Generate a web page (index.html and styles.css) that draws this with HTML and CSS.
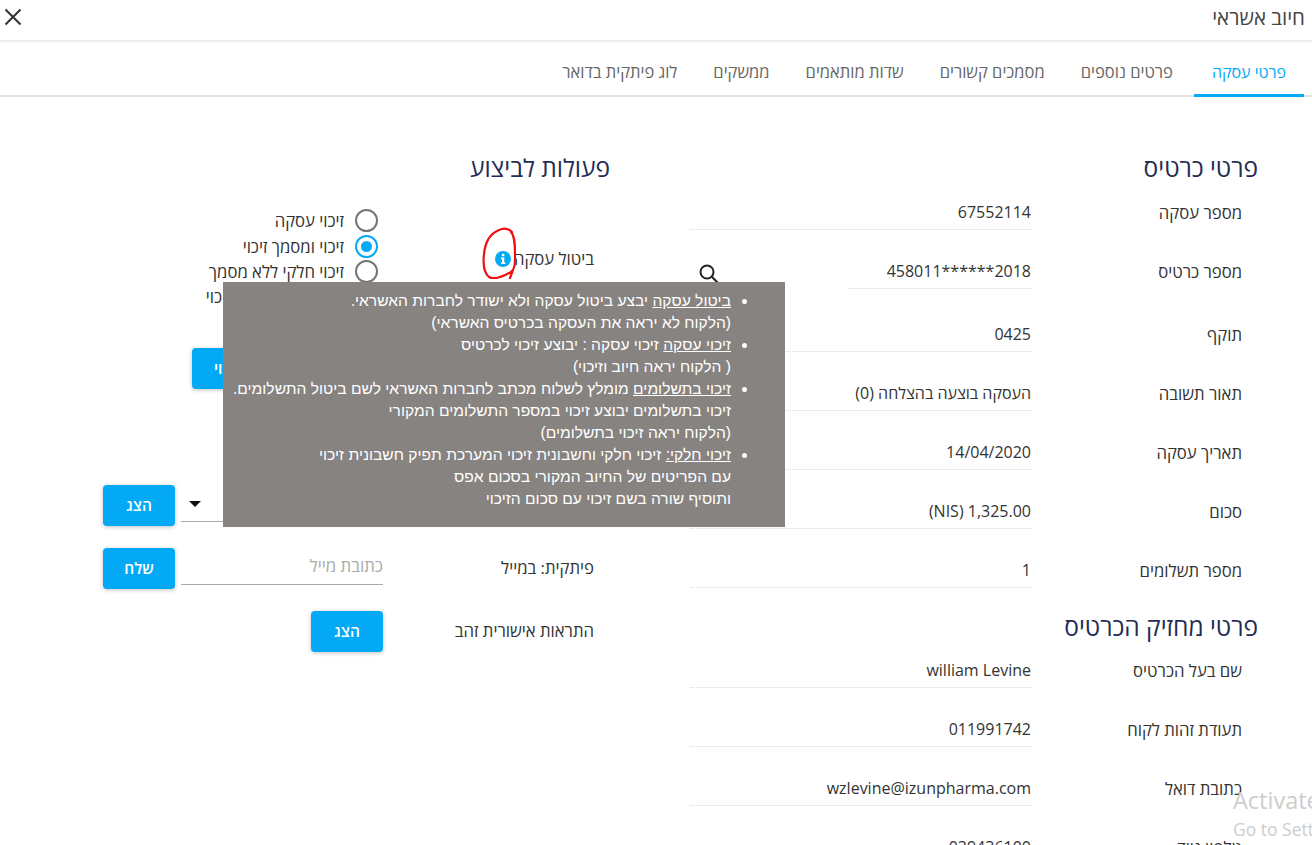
FILE: index.html
```html
<!DOCTYPE html>
<html lang="he" dir="rtl">
<head>
<meta charset="utf-8">
<title>חיוב אשראי</title>
<link rel="stylesheet" href="styles.css">
</head>
<body>
<div class="page">
  <header class="topbar">
    <h1 class="title">חיוב אשראי</h1>
    <svg class="close" viewBox="0 0 18 18" width="18" height="18" aria-label="סגור"><path d="M1.5 1.5 16.5 16.5M16.5 1.5 1.5 16.5"/></svg>
  </header>
  <nav class="tabs">
    <a class="tab active">פרטי עסקה</a>
    <a class="tab">פרטים נוספים</a>
    <a class="tab">מסמכים קשורים</a>
    <a class="tab">שדות מותאמים</a>
    <a class="tab">ממשקים</a>
    <a class="tab">לוג פיתקית בדואר</a>
  </nav>
  <main class="content">
    <section class="details">
      <h2 class="heading">פרטי כרטיס</h2>
      <div class="rows">
        <div class="row"><span class="label">מספר עסקה</span><span class="value">67552114</span></div>
        <div class="row"><span class="label">מספר כרטיס</span><span class="value short" dir="ltr">458011******2018</span>
          <svg class="search" viewBox="0 0 24 24" width="24" height="24"><circle cx="10" cy="10" r="6.5"/><path d="M14.8 14.8 21 21"/></svg></div>
        <div class="row tall"><span class="label">תוקף</span><span class="value">0425</span></div>
        <div class="row"><span class="label">תאור תשובה</span><span class="value">העסקה בוצעה בהצלחה (0)</span></div>
        <div class="row"><span class="label">תאריך עסקה</span><span class="value">14/04/2020</span></div>
        <div class="row"><span class="label">סכום</span><span class="value" dir="ltr">(NIS) 1,325.00</span></div>
        <div class="row"><span class="label">מספר תשלומים</span><span class="value">1</span></div>
      </div>
      <h2 class="heading second">פרטי מחזיק הכרטיס</h2>
      <div class="rows">
        <div class="row"><span class="label">שם בעל הכרטיס</span><span class="value" dir="ltr">william Levine</span></div>
        <div class="row"><span class="label">תעודת זהות לקוח</span><span class="value">011991742</span></div>
        <div class="row"><span class="label">כתובת דואל</span><span class="value" dir="ltr">wzlevine@izunpharma.com</span></div>
        <div class="row"><span class="label">טלפון נייד</span><span class="value">039436100</span></div>
      </div>
    </section>
    <section class="actions">
      <h2 class="heading">פעולות לביצוע</h2>
      <div class="action cancel">
        <span class="label with-icon">ביטול עסקה
          <svg class="info" viewBox="0 0 16 16" width="16" height="16"><circle cx="8" cy="8" r="8"/><rect class="glyph" x="6.9" y="2.8" width="2.5" height="2.4" rx=".6"/><path class="glyph" d="M5.9 6.5H9.3V11.6H10.4V13H5.9V11.6H7V7.9H5.9Z"/></svg>
        </span>
        <div class="radios">
          <label class="radio"><span class="dot"></span>זיכוי עסקה</label>
          <label class="radio"><span class="dot on"></span>זיכוי ומסמך זיכוי</label>
          <label class="radio"><span class="dot"></span>זיכוי חלקי ללא מסמך</label>
          <label class="radio"><span class="dot"></span>זיכוי חלקי ומסמך זיכוי</label>
        </div>
      </div>
      <button class="btn run">בצע זיכוי</button>
      <div class="action print">
        <span class="label"></span>
        <div class="select"><span class="caret"></span></div>
        <button class="btn">הצג</button>
      </div>
      <div class="action">
        <span class="label">פיתקית: במייל</span>
        <input class="mail" placeholder="כתובת מייל">
        <button class="btn">שלח</button>
      </div>
      <div class="action">
        <span class="label">התראות אישורית זהב</span>
        <button class="btn">הצג</button>
      </div>
    </section>
  </main>
  <div class="tooltip">
    <ul>
      <li><u>ביטול עסקה</u> יבצע ביטול עסקה ולא ישודר לחברות האשראי.<br>(הלקוח לא יראה את העסקה בכרטיס האשראי)</li>
      <li><u>זיכוי עסקה</u> זיכוי עסקה : יבוצע זיכוי לכרטיס<br>( הלקוח יראה חיוב וזיכוי)</li>
      <li><u>זיכוי בתשלומים</u> מומלץ לשלוח מכתב לחברות האשראי לשם ביטול התשלומים.<br>זיכוי בתשלומים יבוצע זיכוי במספר התשלומים המקורי<br>(הלקוח יראה זיכוי בתשלומים)</li>
      <li><u>זיכוי חלקי:</u> זיכוי חלקי וחשבונית זיכוי המערכת תפיק חשבונית זיכוי<br>עם הפריטים של החיוב המקורי בסכום אפס<br>ותוסיף שורה בשם זיכוי עם סכום הזיכוי</li>
    </ul>
  </div>
  <svg class="scribble" viewBox="0 0 40 60" width="40" height="60"><path d="M32 13C27 8 22 9 17 12 9 16 5 25 4 35 3 44 4 54 9 58 14 61 24 57 31 53 35 50 35 45 35 37 35 27 35 17 31 13M33 51 30 59"/></svg>
  <div class="watermark" dir="ltr">
    <div class="wm-big">Activate Windows</div>
    <div class="wm-small">Go to Settings to activate Windows.</div>
  </div>
</div>
</body>
</html>
```
FILE: styles.css
```css
* { box-sizing: border-box; }
html, body { margin: 0; padding: 0; height: 100%; overflow: hidden; background: #fff; }
body { font-family: "Open Sans", "Liberation Sans", "DejaVu Sans", sans-serif; color: #333; font-size: 14px; }
.page { position: relative; width: 1312px; height: 845px; overflow: hidden; }

.topbar { height: 42px; border-bottom: 2px solid #eee; display: flex; align-items: center; justify-content: space-between; padding: 0 7px 6px 4px; }
.title { margin: 0; font-size: 20.5px; font-weight: 400; color: #444; line-height: 32px; }
.close { display: block; }
.close path { fill: none; stroke: #333; stroke-width: 2; }

.tabs { height: 55px; border-bottom: 2px solid #e2e2e2; display: flex; padding-right: 8px; }
.tab { height: 55px; padding: 0 18px; line-height: 60px; font-size: 16.5px; color: #666; border-bottom: 3px solid transparent; }
.tab.active { color: #04a9f5; border-bottom-color: #04a9f5; font-size: 16px; margin-left: 3px; }

.content { display: flex; padding: 51px 54px 0 0; align-items: flex-start; }
.heading { margin: 0 0 13px; font-size: 24.5px; font-weight: 400; line-height: 40px; color: #1f2d54; }
.heading.second { margin: 19px 0 12px; }

.details { width: 568px; flex: none; }
.rows { display: flex; flex-direction: column; gap: 30px; padding-right: 16px; }
.row { display: flex; align-items: flex-end; height: 29px; }
.row.tall { margin-top: 4px; }
.label { width: 211px; flex: none; font-size: 16.7px; line-height: 22px; color: #333; }
.row .label { padding-bottom: 6px; }
.value { flex: 1; height: 29px; padding-bottom: 6px; line-height: 22px; font-size: 16px; color: #333; border-bottom: 1px dotted #d8d8d8; text-align: right; }
.value.short { flex: none; width: 183px; }
.search { margin: 0 auto 3px 7px; display: block; }
.search circle, .search path { fill: none; stroke: #222; stroke-width: 2; }

.actions { margin-right: 80px; width: 507px; flex: none; }
.action { display: flex; align-items: center; padding-right: 16px; }
.cancel { margin-top: 20px; }
.with-icon { display: flex; align-items: center; gap: 3px; }
.info { flex: none; }
.info circle { fill: #04a9f5; }
.info .glyph { fill: #fff; }
.radios { display: flex; flex-direction: column; padding-right: 5px; }
.radio { display: flex; align-items: center; gap: 11px; height: 25.4px; font-size: 16.7px; color: #333; }
.dot { width: 23px; height: 23px; border-radius: 50%; border: 2px solid #757575; flex: none; position: relative; background: #fff; }
.dot.on { border-color: #04a9f5; }
.dot.on::after { content: ""; position: absolute; inset: 4px; border-radius: 50%; background: #04a9f5; }

.btn { width: 72px; height: 41px; flex: none; border: 0; border-radius: 4px; background: #04a9f5; color: #fff; font: 600 15.5px "Open Sans", "Liberation Sans", sans-serif; box-shadow: 0 1px 4px rgba(0, 0, 0, .25); padding: 0; }
.select + .btn, .mail + .btn { margin-right: 6px; }
.run { display: block; width: 100px; margin: 38px 318px 0 0; }
.print { margin-top: 96px; }
.print + .action, .print + .action + .action { margin-top: 22px; }
.select { width: 202px; height: 37px; border-bottom: 1px solid #aaa; position: relative; align-self: flex-start; }
.caret { position: absolute; left: 8px; top: 16px; border: 6px solid transparent; border-top-color: #111; border-bottom: 0; }
.mail { width: 202px; height: 37px; align-self: flex-start; border: 0; border-bottom: 1px solid #aaa; outline: 0; padding: 0; font: 16.8px "Open Sans", "Liberation Sans", sans-serif; background: transparent; }
.mail::placeholder { color: #aaa; opacity: 1; }

.tooltip { position: absolute; left: 223px; top: 282px; width: 562px; height: 245px; background: #878381; color: #fff; }
.tooltip ul { margin: 0; padding: 8px 54px 0 0; font: 15.6px/22px "Liberation Sans", sans-serif; }
.tooltip li { margin: 0; }
.scribble { position: absolute; left: 480px; top: 219px; pointer-events: none; }
.scribble path { fill: none; stroke: #f01010; stroke-width: 2.2; stroke-linecap: round; stroke-linejoin: round; }
.watermark { position: absolute; left: 1233px; top: 784px; width: 420px; color: #cdcdcd; white-space: nowrap; }
.wm-big { font-size: 23.5px; line-height: 33px; }
.wm-small { font-size: 17.5px; line-height: 24px; }
```
